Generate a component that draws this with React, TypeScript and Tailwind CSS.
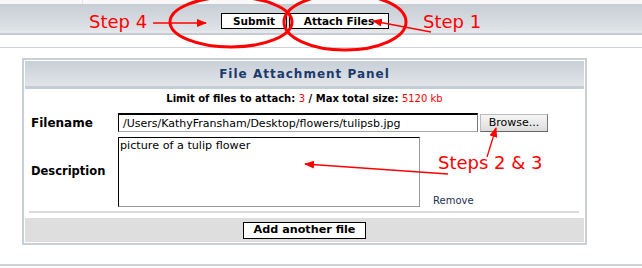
import React from "react";

const font = { fontFamily: '"DejaVu Sans", Verdana, sans-serif' };

function Annotations() {
  return (
    <>
      <svg
        className="absolute left-0 top-0 pointer-events-none"
        width="642"
        height="268"
        viewBox="0 0 642 268"
      >
        <defs>
          <marker id="head" markerWidth="10" markerHeight="8" refX="9" refY="4" orient="auto" markerUnits="userSpaceOnUse">
            <path d="M0,0 L10,4 L0,8 Z" fill="#f00" />
          </marker>
        </defs>
        <ellipse cx="231" cy="22" rx="61" ry="25" fill="none" stroke="#f00" strokeWidth="3" />
        <ellipse cx="345" cy="22" rx="61" ry="28" fill="none" stroke="#f00" strokeWidth="3" />
        <line x1="153" y1="23" x2="206" y2="23" stroke="#f00" strokeWidth="1.3" markerEnd="url(#head)" />
        <line x1="431" y1="32" x2="373" y2="21" stroke="#f00" strokeWidth="1.3" markerEnd="url(#head)" />
        <line x1="487" y1="157" x2="496" y2="128" stroke="#f00" strokeWidth="1.3" markerEnd="url(#head)" />
        <line x1="448" y1="174" x2="305" y2="164" stroke="#f00" strokeWidth="1.3" markerEnd="url(#head)" />
      </svg>
      <div className="absolute left-[89px] top-[10px] text-[18px] leading-[24px] text-[#f00]" style={font}>
        Step 4
      </div>
      <div className="absolute left-[423px] top-[10px] text-[18px] leading-[24px] text-[#f00]" style={font}>
        Step 1
      </div>
      <div className="absolute left-[438px] top-[151px] text-[18px] leading-[24px] text-[#f00]" style={font}>
        Steps 2 &amp; 3
      </div>
    </>
  );
}

export default function App() {
  return (
    <div className="relative w-[642px] h-[268px] overflow-hidden bg-white text-black" style={font}>
      {/* toolbar */}
      <div className="flex h-[4px] bg-[#f8f8f8]">
        <div className="w-[83px] border-r border-[#e4e4e4]" />
      </div>
      <div className="flex h-[27px] items-start gap-[2px] pl-[221px] pt-[9px] bg-gradient-to-b from-[#c6cdd5] to-[#e1e4e8]">
        <div className="flex h-[16px] w-[66px] items-center justify-center border border-black bg-white text-[10.5px] font-bold leading-none">
          Submit
        </div>
        <div className="flex h-[16px] w-[100px] items-center justify-center border border-black bg-white text-[10.5px] font-bold leading-none">
          Attach Files
        </div>
      </div>
      <div className="h-[2px] bg-[#e6e8eb]" />
      <div className="h-[2px] bg-[#c6ccd3]" />
      <div className="h-[12px]" />
      <div className="h-px bg-[#cdd2d7]" />
      <div className="h-[10px]" />

      {/* panel */}
      <div className="ml-[22px] w-[565px] border-2 border-[#c7cfd7] bg-white p-px">
        <div className="flex h-[25px] items-center justify-center bg-gradient-to-b from-[#c8cfd7] to-[#e2e5e9] text-[12px] font-bold tracking-[1px] text-[#1c3a6b]">
          File Attachment Panel
        </div>
        <div className="h-[3px] bg-[#c4ccd4]" />
        <div className="h-[24px] pt-[3px] text-center text-[10px] font-bold leading-[14px]">
          Limit of files to attach: <span className="font-normal text-[#f00]">3</span> / Max total size:{" "}
          <span className="font-normal text-[#f00]">5120 kb</span>
        </div>
        <div className="flex h-[19px] items-center">
          <div className="w-[93px] pl-[6px] text-[12px] font-bold">Filename</div>
          <div className="flex h-[19px] w-[360px] items-center border-t-2 border-l border-r border-b border-t-black border-l-black border-r-[#777] border-b-[#aaa] pl-[4px] text-[11px] leading-none">
            /Users/KathyFransham/Desktop/flowers/tulipsb.jpg
          </div>
          <div className="ml-[2px] flex h-[18px] w-[68px] items-center justify-center border border-[#bbb] border-r-[#777] border-b-[#666] bg-gradient-to-b from-[#f6f6f6] to-[#dcdcdc] text-[11px] leading-none">
            Browse...
          </div>
        </div>
        <div className="mt-[5px] flex h-[70px]">
          <div className="flex w-[93px] items-center pl-[6px] text-[11.5px] font-bold">Description</div>
          <div className="h-[70px] w-[302px] border border-t-black border-l-black border-r-[#999] border-b-[#999] pl-[1px] pt-[1px] text-[11.2px] leading-[14px]">
            picture of a tulip flower
          </div>
          <div className="ml-[13px] self-end text-[10px] leading-[12px] text-[#1e2f55]">Remove</div>
        </div>
        <div className="ml-[4px] mt-[4px] h-[2px] w-[550px] bg-[#dcdcdc]" />
        <div className="mt-[5px] flex h-[24px] items-center justify-center bg-[#dedede]">
          <div className="flex h-[17px] w-[123px] items-center justify-center border border-black bg-white text-[11.2px] font-bold leading-none">
            Add another file
          </div>
        </div>
      </div>

      <div className="h-[19px]" />
      <div className="h-[2px] bg-[#cdd3d9]" />

      <Annotations />
    </div>
  );
}
